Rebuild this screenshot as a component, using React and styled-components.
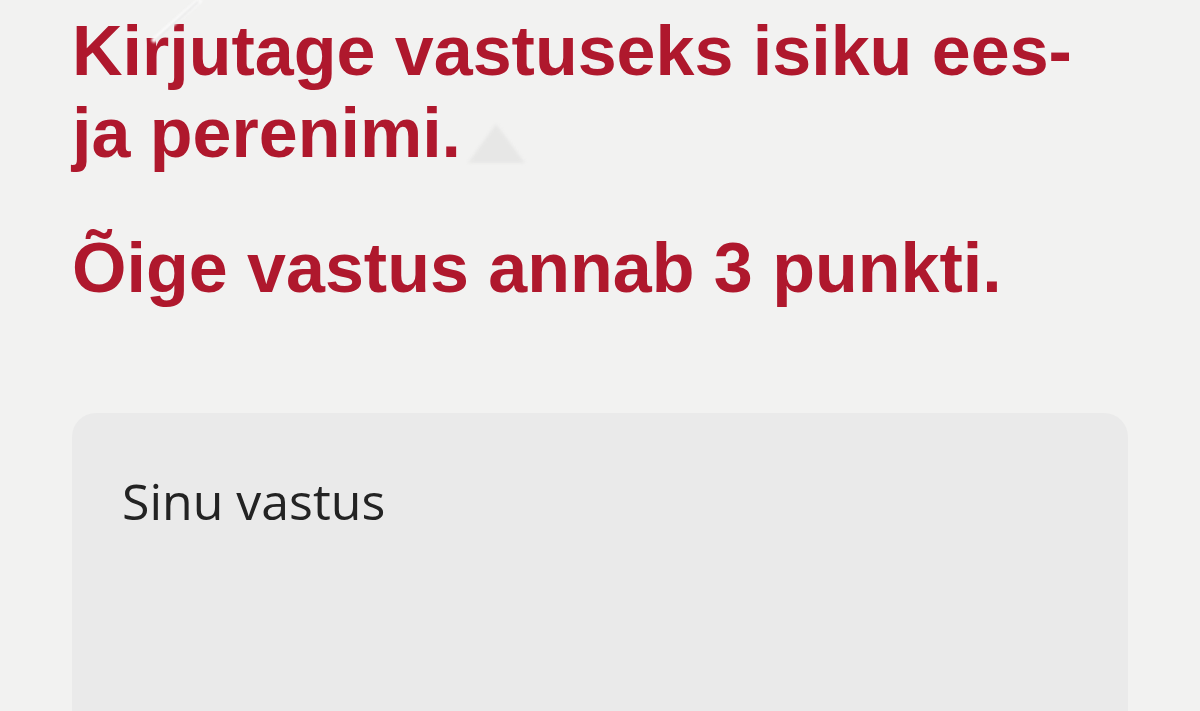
import React from "react";
import styled, { createGlobalStyle } from "styled-components";

const GlobalStyle = createGlobalStyle`
  html, body {
    margin: 0;
    padding: 0;
    height: 100%;
    overflow: hidden;
    background: #f2f2f1;
  }
  #root {
    height: 100%;
  }
`;

const Screen = styled.main`
  position: relative;
  box-sizing: border-box;
  height: 100vh;
  overflow: hidden;
  padding: 10px 72px 0 72px;
  display: flex;
  flex-direction: column;
  background: #f2f2f1;
`;

const Prompt = styled.p`
  margin: 0;
  margin-top: ${(p) => p.$gap || 0}px;
  font-family: "Liberation Sans", Arial, sans-serif;
  font-weight: 700;
  font-size: 70px;
  line-height: 82px;
  color: #af182d;
  letter-spacing: 0;
`;

const AnswerField = styled.textarea`
  box-sizing: border-box;
  display: block;
  width: 100%;
  height: 380px;
  margin-top: 104px;
  flex-shrink: 0;
  padding: 58px 50px;
  border: none;
  border-radius: 24px;
  background: #eaeaea;
  resize: none;
  outline: none;
  font-family: "Open Sans", "Noto Sans", sans-serif;
  font-weight: 400;
  font-size: 50px;
  line-height: 60px;
  color: #232323;

  &::placeholder {
    color: #232323;
    opacity: 1;
  }
`;

/* faint watermark shapes in the backdrop */
const Streak = styled.svg`
  position: absolute;
  left: 146px;
  top: 0;
  width: 64px;
  height: 46px;
  pointer-events: none;
  filter: blur(1.2px);
`;

const Peak = styled.svg`
  position: absolute;
  left: 462px;
  top: 118px;
  width: 68px;
  height: 50px;
  pointer-events: none;
  filter: blur(1.5px);
`;

export default function App() {
  return (
    <>
      <GlobalStyle />
      <Screen>
        <Streak viewBox="0 0 64 46" aria-hidden="true">
          <line x1="54" y1="0" x2="8" y2="40" stroke="#fbfbfb" strokeWidth="5" strokeLinecap="round" />
          <line x1="52" y1="2" x2="10" y2="40" stroke="#e0e0e0" strokeWidth="1.5" strokeLinecap="round" />
        </Streak>
        <Peak viewBox="0 0 68 50" aria-hidden="true">
          <polygon points="34,6 6,45 63,45" fill="#e7e7e6" />
        </Peak>
        <Prompt>Kirjutage vastuseks isiku ees- ja perenimi.</Prompt>
        <Prompt $gap={53}>Õige vastus annab 3 punkti.</Prompt>
        <AnswerField placeholder="Sinu vastus" />
      </Screen>
    </>
  );
}
